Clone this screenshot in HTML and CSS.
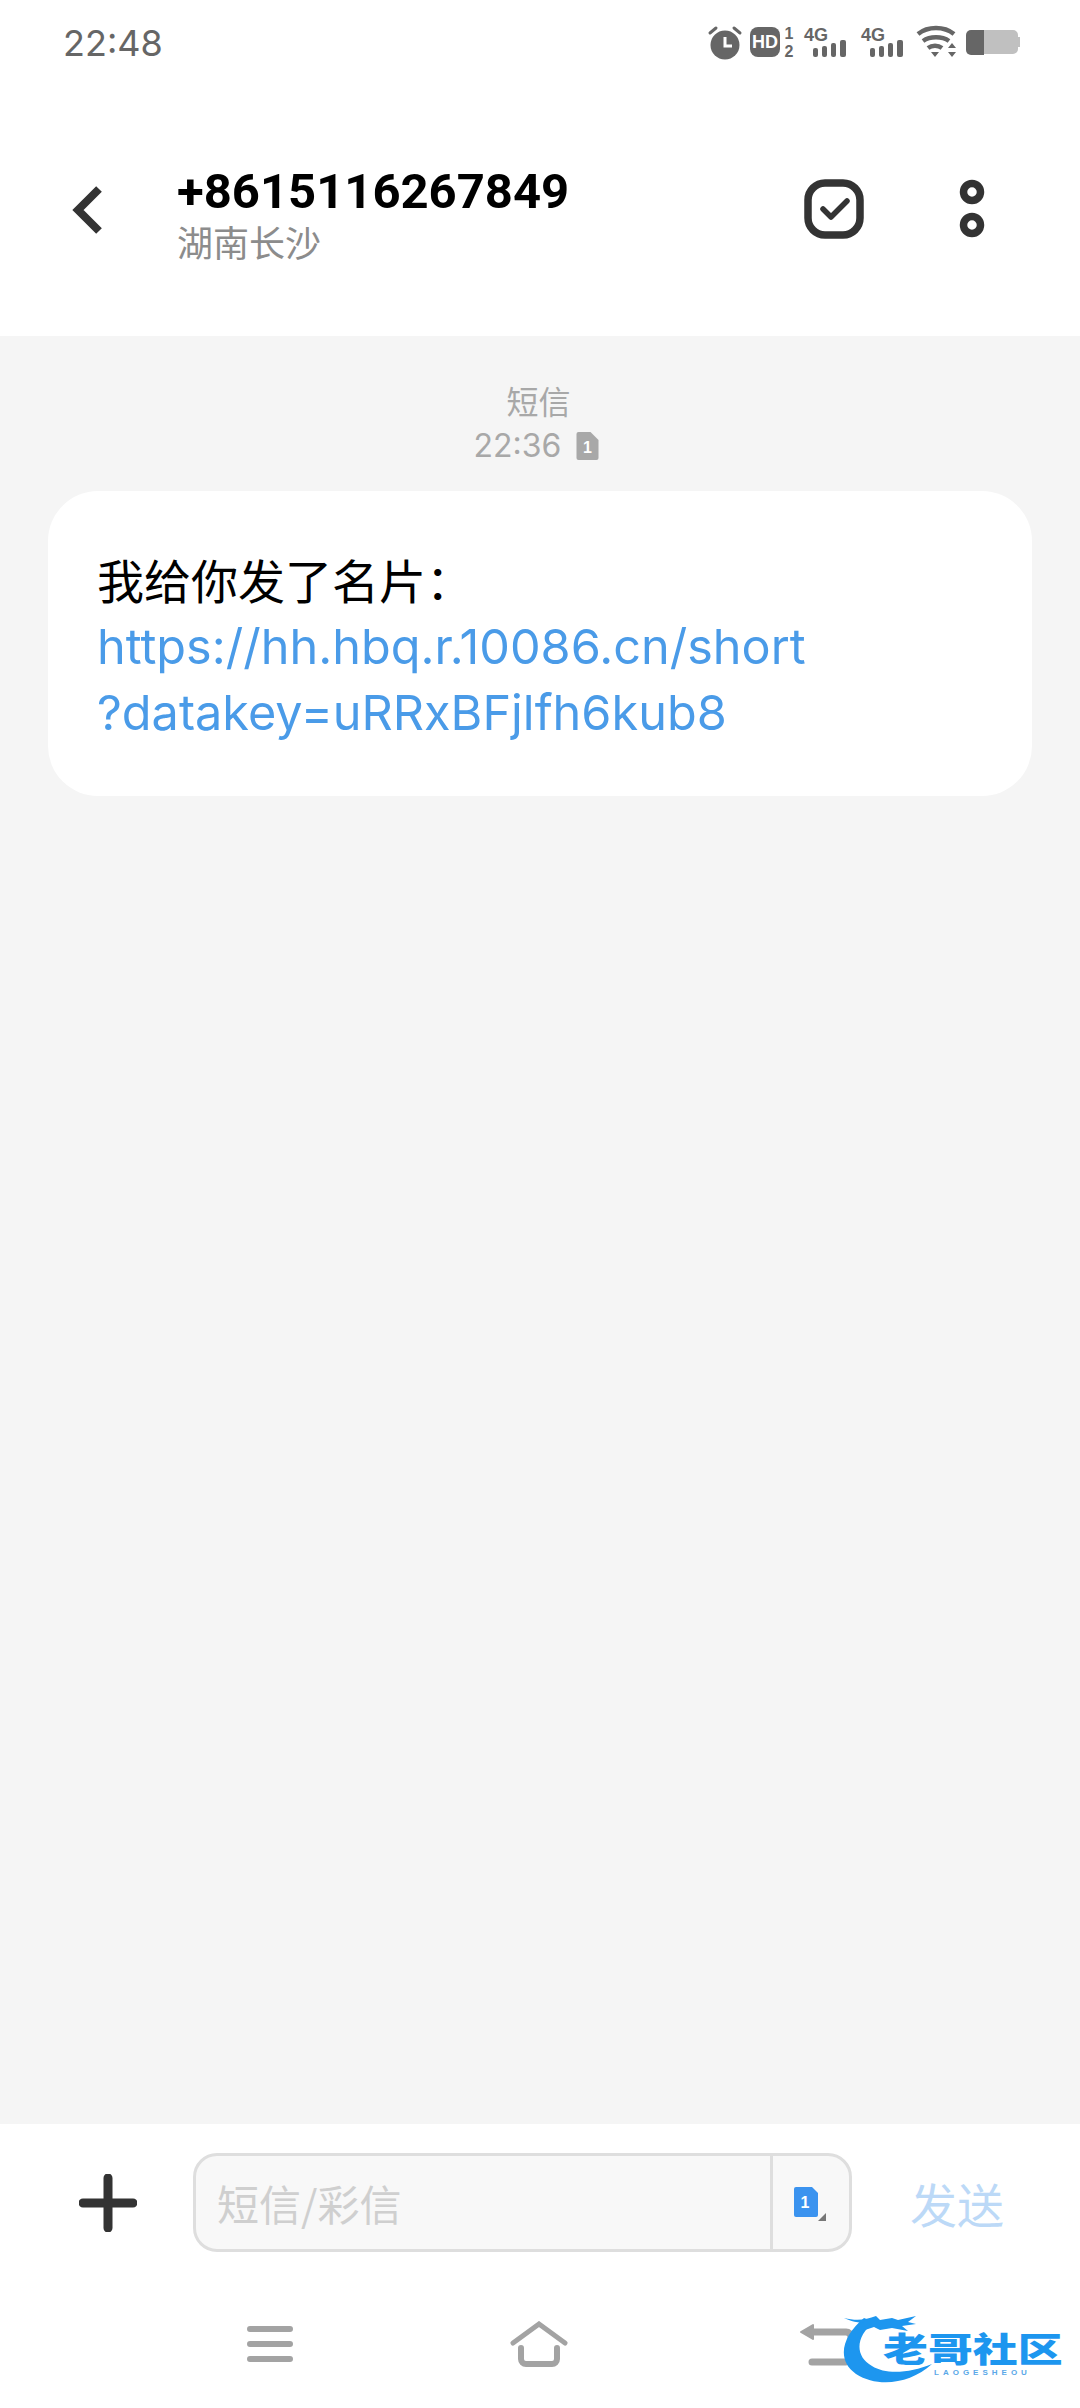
FILE: index.html
```html
<!DOCTYPE html>
<html lang="zh-CN">
<head>
    <meta charset="UTF-8">
    <meta name="viewport" content="width=device-width, initial-scale=1.0">
    <title>+8615116267849</title>
    <link rel="stylesheet" href="styles.css">
</head>
<body>
    <div class="status-bar">
        <span class="status-time">22:48</span>
        <svg class="status-icons" width="320" height="36" viewBox="0 0 320 36">
            <!-- alarm -->
            <circle cx="25" cy="21" r="14.5" fill="#666"/>
            <path d="M25 13v9h7" fill="none" stroke="#fff" stroke-width="3"/>
            <path d="M10 9l6-5M40 9l-6-5" fill="none" stroke="#666" stroke-width="3" stroke-linecap="round"/>
            <!-- hd -->
            <rect x="50" y="3" width="30" height="30" rx="8" fill="#666"/>
            <text x="65" y="24" class="hd-text">HD</text>
            <text x="89" y="15" class="sim-text">1</text>
            <text x="89" y="33" class="sim-text">2</text>
            <!-- signal 1 -->
            <text x="104" y="17" class="net-text">4G</text>
            <g fill="#666">
                <rect x="113" y="24" width="5" height="9" rx="2"/>
                <rect x="122" y="22" width="5" height="11" rx="2"/>
                <rect x="131" y="19" width="5" height="14" rx="2"/>
                <rect x="140" y="16" width="6" height="17" rx="2"/>
            </g>
            <!-- signal 2 -->
            <text x="161" y="17" class="net-text">4G</text>
            <g fill="#666">
                <rect x="170" y="24" width="5" height="9" rx="2"/>
                <rect x="179" y="22" width="5" height="11" rx="2"/>
                <rect x="188" y="19" width="5" height="14" rx="2"/>
                <rect x="197" y="16" width="6" height="17" rx="2"/>
            </g>
            <!-- wifi -->
            <g fill="none" stroke="#666" stroke-width="4.5">
                <path d="M218 10c10-8 26-8 36 0"/>
                <path d="M223 17c7-5 19-5 26 0"/>
                <path d="M228 24c4-3 10-3 14 0"/>
            </g>
            <path d="M231 28h8l-4 5zM248 24l4-5 4 5zM248 28h8l-4 5z" fill="#666"/>
            <!-- battery -->
            <path d="M284 6h29a5 5 0 0 1 5 5v2h2v10h-2v2a5 5 0 0 1-5 5h-29z" fill="#c0c0c0"/>
            <path d="M284 6h-13a5 5 0 0 0-5 5v15a5 5 0 0 0 5 5h13z" fill="#666"/>
        </svg>
    </div>

    <header class="top-bar">
        <svg class="back-icon" width="32" height="50" viewBox="0 0 32 50">
            <path d="M27 4L6 25l21 21" fill="none" stroke="#333" stroke-width="8"/>
        </svg>
        <div class="contact">
            <div class="contact-number">+8615116267849</div>
            <div class="contact-place">湖南长沙</div>
        </div>
        <svg class="select-icon" width="60" height="60" viewBox="0 0 60 60">
            <rect x="4" y="4" width="52" height="52" rx="17" fill="none" stroke="#333" stroke-width="7.5"/>
            <path d="M19 30l8 8 16-16" fill="none" stroke="#333" stroke-width="5.5" stroke-linecap="round" stroke-linejoin="round"/>
        </svg>
        <svg class="more-icon" width="26" height="60" viewBox="0 0 26 60">
            <circle cx="13" cy="13" r="8.5" fill="none" stroke="#333" stroke-width="7.5"/>
            <circle cx="13" cy="46" r="8.5" fill="none" stroke="#333" stroke-width="7.5"/>
        </svg>
    </header>

    <main class="thread">
        <div class="msg-meta">
            <div class="msg-type">短信</div>
            <div class="msg-time">
                <span>22:36</span>
                <svg width="25" height="30" viewBox="0 0 24 30">
                    <path d="M3 1h12l8 8v18a2 2 0 0 1-2 2H3a2 2 0 0 1-2-2V3a2 2 0 0 1 2-2z" fill="#a8a8a8"/>
                    <text x="12" y="22" class="sim-badge">1</text>
                </svg>
            </div>
        </div>
        <div class="bubble">
            <div>我给你发了名片<span class="colon">：</span></div>
            <a class="bubble-link">https://hh.hbq.r.10086.cn/short<br>?datakey=uRRxBFjlfh6kub8</a>
        </div>
    </main>

    <footer class="bottom">
        <div class="composer">
            <svg class="plus-icon" width="58" height="58" viewBox="0 0 58 58">
                <path d="M29 4v50M4 29h50" fill="none" stroke="#333" stroke-width="9" stroke-linecap="round"/>
            </svg>
            <div class="input-box">
                <div class="input-text">短信/彩信</div>
                <div class="sim-switch">
                    <svg width="34" height="36" viewBox="0 0 34 36">
                        <path d="M2 0h16l6 6v22a2 2 0 0 1-2 2H2a2 2 0 0 1-2-2V2a2 2 0 0 1 2-2z" fill="#3b93ef"/>
                        <text x="11" y="21" class="sim-badge-small">1</text>
                        <path d="M32 26v8h-8z" fill="#777"/>
                    </svg>
                </div>
            </div>
            <div class="send-btn">发送</div>
        </div>
        <nav class="nav-bar">
            <svg width="46" height="36" viewBox="0 0 46 36">
                <path d="M3 3h40M3 18h40M3 33h40" stroke="#a3a3a3" stroke-width="6" stroke-linecap="round"/>
            </svg>
            <svg class="nav-home" width="58" height="46" viewBox="0 0 58 46">
                <path d="M3 22L29 3l26 19" fill="none" stroke="#a3a3a3" stroke-width="5" stroke-linecap="round"/>
                <path d="M11 27v11a5 5 0 0 0 5 5h26a5 5 0 0 0 5-5V27" fill="none" stroke="#a3a3a3" stroke-width="6" stroke-linecap="round"/>
            </svg>
            <svg width="58" height="46" viewBox="0 0 58 46">
                <path d="M3 11l12-7v14z" fill="#a3a3a3" stroke="#a3a3a3" stroke-width="2" stroke-linejoin="round"/>
                <path d="M12 11h36a5 5 0 0 1 5 5v20a5 5 0 0 1-5 5H14" fill="none" stroke="#a3a3a3" stroke-width="7" stroke-linecap="round"/>
            </svg>
        </nav>
        <div class="watermark">
            <svg width="225" height="78" viewBox="0 0 225 78">
                <path d="M22 10C0 28-6 52 14 66c22 14 54 10 76-10-22 9-46 11-60 2C12 48 14 28 32 14z" fill="#1d96ef"/>
                <path d="M2 10c12 3 22 2 32-2l4 4 12-2 6 2 18-4-8 6 8 2-14 2 6 5-16-3-12 2-6-3-12 4c2-4 4-6 6-8-10 0-18-2-24-5z" fill="#1d96ef"/>
            </svg>
            <div class="watermark-name">老哥社区</div>
            <div class="watermark-sub">LAOGESHEOU</div>
        </div>
    </footer>
</body>
</html>
```

FILE: styles.css
```css
* {
    box-sizing: border-box;
}
body {
    margin: 0;
    width: 1080px;
    height: 2408px;
    display: flex;
    flex-direction: column;
    background: #fff;
    font-family: Inter, "Noto Sans CJK SC", sans-serif;
    overflow: hidden;
}
svg {
    display: block;
    flex: none;
}

/* status bar */
.status-bar {
    height: 84px;
    display: flex;
    justify-content: space-between;
    align-items: center;
    padding: 2px 60px 0 63px;
}
.status-time {
    font-size: 36px;
    color: #666;
}
.status-icons {
    margin-top: -2px;
}
.hd-text {
    font: 800 18px "Liberation Sans", sans-serif;
    fill: #fff;
    text-anchor: middle;
}
.sim-text {
    font: 700 16px "Liberation Sans", sans-serif;
    fill: #666;
    text-anchor: middle;
}
.net-text {
    font: 700 18px "Liberation Sans", sans-serif;
    fill: #666;
}

/* header */
.top-bar {
    height: 252px;
    display: flex;
    align-items: center;
    padding: 0 0 0 72px;
}
.contact {
    margin-left: 73px;
    margin-top: 5px;
    flex: 1;
}
.contact-number {
    font: 700 49px/56px Roboto, sans-serif;
    color: #000;
}
.contact-place {
    font: 36px/42px "Noto Sans CJK SC", sans-serif;
    color: #8c8c8c;
}
.select-icon {
    margin: -2px 95px 0 0;
}
.more-icon {
    margin: -2px 95px 0 0;
}

/* messages */
.thread {
    flex: 1;
    background: #f5f5f5;
    padding: 46px 48px 0;
}
.msg-meta {
    text-align: center;
    color: #a8a8a8;
}
.msg-type {
    font-size: 32px;
    line-height: 42px;
    padding-right: 3px;
}
.msg-time {
    display: flex;
    justify-content: center;
    align-items: center;
    gap: 14px;
    font-size: 32px;
    line-height: 44px;
    padding-right: 6px;
}
.sim-badge {
    font: 700 16px "Liberation Sans", sans-serif;
    fill: #fff;
    text-anchor: middle;
}
.sim-badge-small {
    font: 700 16px "Liberation Sans", sans-serif;
    fill: #fff;
    text-anchor: middle;
}
.bubble {
    margin-top: 23px;
    height: 305px;
    padding: 55px 49px 0;
    background: #fff;
    border-radius: 50px;
    font: 47px/66px "Noto Sans CJK SC", sans-serif;
    color: #000;
}
.colon {
    font-family: "Noto Sans CJK TC", sans-serif;
}
.bubble-link {
    display: block;
    margin-top: 2px;
    font-family: Inter, sans-serif;
    font-size: 48.6px;
    color: #4a9be8;
}

/* bottom area */
.bottom {
    height: 284px;
    position: relative;
}
.composer {
    display: flex;
    align-items: center;
    padding: 29px 0 0 79px;
}
.input-box {
    margin-left: 56px;
    width: 659px;
    height: 99px;
    display: flex;
    background: #f8f8f8;
    border: 3px solid #dedede;
    border-radius: 24px;
}
.input-text {
    flex: 1;
    padding-left: 21px;
    font: 42px/93px "Noto Sans CJK SC", sans-serif;
    color: #cfcfcf;
    border-right: 3px solid #dedede;
}
.sim-switch {
    width: 76px;
    padding: 31px 0 0 21px;
}
.send-btn {
    margin-left: 58px;
    font: 47px/60px "Noto Sans CJK SC", sans-serif;
    color: #bcd9f7;
}
.nav-bar {
    display: flex;
    justify-content: space-between;
    align-items: center;
    margin-top: 69px;
    padding: 0 224px 0 247px;
}
.nav-home {
    margin-right: 14px;
}

/* site watermark over the nav bar */
.watermark {
    position: absolute;
    left: 842px;
    top: 184px;
    width: 225px;
    height: 78px;
}
.watermark-name {
    position: absolute;
    left: 41px;
    top: 24px;
    font: 900 34px/32px "Noto Sans CJK SC", sans-serif;
    color: #1d96ef;
    white-space: nowrap;
    transform: scaleX(1.32);
    transform-origin: left;
}
.watermark-sub {
    position: absolute;
    left: 92px;
    top: 61px;
    font: 700 8px/8px "Liberation Sans", sans-serif;
    letter-spacing: 4px;
    color: #5aa8e8;
    white-space: nowrap;
}
```
